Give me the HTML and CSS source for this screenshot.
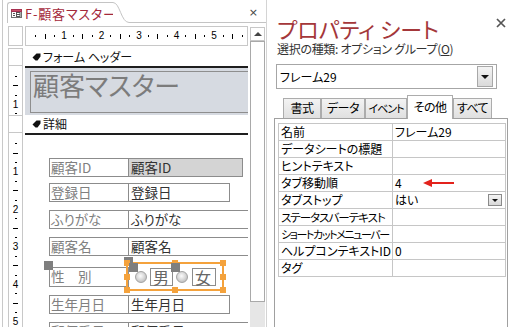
FILE: index.html
```html
<!DOCTYPE html>
<html lang="ja">

<head>
    <meta charset="UTF-8">
    <meta name="viewport" content="width=device-width, initial-scale=1.0">
    <title>F-顧客マスター</title>
    <link rel="stylesheet" href="styles.css">
</head>

<body>
    <div class="app">

        <!-- design view -->
        <div class="doc">
            <div class="doc-tabs">
                <div class="doc-tab">
                    <svg class="form-icon" width="11" height="9" viewBox="0 0 11 9">
                        <rect x="0.5" y="0.5" width="10" height="8" fill="#fff" stroke="#6e6e6e" />
                        <rect x="0.5" y="0.5" width="10" height="2" fill="#c8506a" stroke="#a63050" />
                        <line x1="2" y1="4.5" x2="4" y2="4.5" stroke="#555" />
                        <line x1="2" y1="6.5" x2="4" y2="6.5" stroke="#555" />
                        <rect x="5.5" y="3.5" width="3.5" height="4" fill="none" stroke="#555" />
                        <line x1="5.5" y1="5.5" x2="9" y2="5.5" stroke="#555" />
                    </svg>
                    <span class="doc-title">F-顧客マスター</span>
                </div>
                <svg class="tab-curve" width="16" height="21" viewBox="0 0 16 21">
                    <path d="M0 0.5 C7 0.5 8 20.5 16 20.5 L0 21 Z" fill="#fff" />
                    <path d="M0 0.5 C7 0.5 8 20.5 16 20.5" fill="none" stroke="#c4c4c4" />
                </svg>
                <div class="tab-fill"><span class="doc-close">×</span></div>
            </div>

            <div class="designer">
                <div class="vcol">
                    <div class="corner"></div>
                    <div class="vbox first"></div>
                    <div class="vruler head">
                        <div class="vr-in head-in">
                            <i class="c"></i><i class="c d"></i><i class="c m"></i><i class="c d"></i><i class="c n">1</i><i class="c d"></i>
                        </div>
                    </div>
                    <div class="vbox"></div>
                    <div class="vruler body">
                        <div class="vr-in body-in">
                            <i class="c"></i><i class="c d"></i><i class="c m"></i><i class="c d"></i><i class="c n">1</i>
                            <i class="c d"></i><i class="c m"></i><i class="c d"></i><i class="c n">2</i>
                            <i class="c d"></i><i class="c m"></i><i class="c d"></i><i class="c n">3</i>
                            <i class="c d"></i><i class="c m"></i><i class="c d"></i><i class="c n">4</i>
                            <i class="c d"></i><i class="c m"></i><i class="c d"></i><i class="c n">5</i>
                            <i class="c d"></i>
                        </div>
                    </div>
                </div>

                <div class="mid">
                    <div class="hruler">
                        <i class="c first"></i><i class="c d"></i><i class="c m"></i><i class="c d"></i><i class="c n">1</i>
                        <i class="c d"></i><i class="c m"></i><i class="c d"></i><i class="c n">2</i>
                        <i class="c d"></i><i class="c m"></i><i class="c d"></i><i class="c n">3</i>
                        <i class="c d"></i><i class="c m"></i><i class="c d"></i><i class="c n">4</i>
                        <i class="c d"></i><i class="c m"></i><i class="c d"></i><i class="c n">5</i>
                        <i class="c d"></i><i class="c m"></i><i class="c d"></i>
                    </div>

                    <div class="sec">
                        <svg class="sec-icon" width="9" height="8" viewBox="0 0 9 8">
                            <path d="M0.5 4.5 L4.5 0.5 H8.5 V3.5 L5.5 7.5 H3.5 Z" fill="#111" />
                        </svg>
                        フォーム ヘッダー
                    </div>
                    <div class="head-area">
                        <div class="title-label">顧客マスター</div>
                    </div>

                    <div class="sec">
                        <svg class="sec-icon" width="9" height="8" viewBox="0 0 9 8">
                            <path d="M0.5 4.5 L4.5 0.5 H8.5 V3.5 L5.5 7.5 H3.5 Z" fill="#111" />
                        </svg>
                        詳細
                    </div>
                    <div class="detail">
                        <div class="row">
                            <div class="lbl">顧客ID</div>
                            <div class="txt w1">顧客ID</div>
                        </div>
                        <div class="row r2">
                            <div class="lbl">登録日</div>
                            <div class="txt w2">登録日</div>
                        </div>
                        <div class="row">
                            <div class="lbl">ふりがな</div>
                            <div class="txt w3">ふりがな</div>
                        </div>
                        <div class="row">
                            <div class="lbl">顧客名</div>
                            <div class="txt w3">顧客名</div>
                        </div>
                        <div class="row sex">
                            <div class="lbl">性　別<span class="h h-lbl"></span></div>
                            <div class="optgroup">
                                <span class="h h-grp"></span>
                                <span class="g" style="left:-4px;top:-4px"></span>
                                <span class="g" style="left:44px;top:-4px"></span>
                                <span class="g" style="left:92px;top:-4px"></span>
                                <span class="g" style="left:-4px;top:10px"></span>
                                <span class="g" style="left:92px;top:10px"></span>
                                <span class="g" style="left:-4px;top:23px"></span>
                                <span class="g" style="left:44px;top:23px"></span>
                                <span class="g" style="left:92px;top:23px"></span>
                                <span class="radio"><span class="h h-rad"></span></span>
                                <span class="opt-lbl">男</span>
                                <span class="radio r-2"><span class="h h-rad2"></span></span>
                                <span class="opt-lbl l-2">女</span>
                            </div>
                        </div>
                        <div class="row">
                            <div class="lbl">生年月日</div>
                            <div class="txt w2">生年月日</div>
                        </div>
                        <div class="row">
                            <div class="lbl">郵便番号</div>
                            <div class="txt w3">郵便番号</div>
                        </div>
                    </div>
                </div>

                <div class="vscroll">
                    <div class="sc-up"></div>
                    <div class="sc-thumb"></div>
                    <div class="sc-track"></div>
                </div>
            </div>
        </div>

        <!-- property sheet -->
        <div class="props">
            <div class="props-head">
                <div class="props-title">プロパティ シート</div>
                <svg class="props-close" width="10" height="10" viewBox="0 0 10 10">
                    <path d="M1 1 L9 9 M9 1 L1 9" stroke="#555" stroke-width="1.7" />
                </svg>
            </div>
            <div class="sel-type">選択の種類: オプション グループ(<u>O</u>)</div>
            <div class="combo">
                <span>フレーム29</span>
                <span class="drop"><i class="tri"></i></span>
            </div>

            <div class="tabs">
                <div class="tab t1">書式</div>
                <div class="tab t2">データ</div>
                <div class="tab t3">イベント</div>
                <div class="tab t4 active">その他</div>
                <div class="tab t5">すべて</div>
            </div>
            <div class="panel">
                <table class="prop-table">
                    <tr><td>名前</td><td>フレーム29</td></tr>
                    <tr><td>データシートの標題</td><td></td></tr>
                    <tr><td>ヒントテキスト</td><td></td></tr>
                    <tr>
                        <td>タブ移動順</td>
                        <td>
                            <div class="cell">
                                <span>4</span>
                                <svg class="arrow" width="32" height="8" viewBox="0 0 32 8">
                                    <polygon points="0,4 9,0 9,8" fill="#e3221c" />
                                    <line x1="8" y1="4" x2="31" y2="4" stroke="#e3221c" stroke-width="2" />
                                </svg>
                            </div>
                        </td>
                    </tr>
                    <tr>
                        <td>タブストップ</td>
                        <td>
                            <div class="cell between">
                                <span>はい</span>
                                <span class="mini-drop"><i class="tri small"></i></span>
                            </div>
                        </td>
                    </tr>
                    <tr><td class="tight">ステータスバーテキスト</td><td></td></tr>
                    <tr><td class="tight more">ショートカットメニューバー</td><td></td></tr>
                    <tr><td>ヘルプコンテキストID</td><td>0</td></tr>
                    <tr><td>タグ</td><td></td></tr>
                </table>
            </div>
        </div>

    </div>
</body>

</html>
```

FILE: styles.css
```css
* {
    box-sizing: border-box;
}

body {
    margin: 0;
    background: #fff;
    color: #000;
    font-family: "Noto Sans CJK JP", "Noto Sans", sans-serif;
    font-feature-settings: "palt";
}

.app {
    display: flex;
    width: 513px;
    height: 327px;
    overflow: hidden;
}

/* ---------- design view ---------- */

.doc {
    width: 265px;
    margin-left: 2px;
    flex: none;
    display: flex;
    flex-direction: column;
    border-left: 1px solid #c9c9c9;
    border-right: 1px solid #d4d4d4;
}

.doc-tabs {
    display: flex;
    flex: none;
    height: 26px;
    padding-top: 2px;
    padding-left: 4px;
}

.doc-tab {
    display: flex;
    align-items: center;
    gap: 3px;
    width: 106px;
    height: 21px;
    padding-left: 3px;
    border-top: 1px solid #c4c4c4;
    border-left: 1px solid #c4c4c4;
    border-top-left-radius: 3px;
}

.form-icon {
    flex: none;
}

.doc-title {
    flex: none;
    font-size: 13px;
    line-height: 1;
    letter-spacing: 0.8px;
    color: #a4293b;
    white-space: nowrap;
}

.tab-curve {
    display: block;
    flex: none;
}

.tab-fill {
    flex: 1;
    height: 21px;
    display: flex;
    justify-content: flex-end;
    align-items: center;
    padding-right: 8px;
    border-bottom: 1px solid #c4c4c4;
}

.doc-close {
    font-family: "DejaVu Sans", sans-serif;
    font-size: 11px;
    line-height: 1;
    color: #444;
}

.designer {
    flex: 1;
    display: flex;
    padding-left: 5px;
    min-height: 0;
}

/* rulers */

.vcol {
    width: 15px;
    flex: none;
    display: flex;
    flex-direction: column;
}

.corner {
    height: 20px;
    flex: none;
    border: 1px solid #c8c8c8;
}

.vbox {
    height: 18px;
    flex: none;
    border: 1px solid #c8c8c8;
}

.vbox.first {
    margin-top: 2px;
}

.vruler {
    flex: none;
    overflow: hidden;
    border-left: 1px solid #c8c8c8;
    border-right: 1px solid #c8c8c8;
}

.vruler.head {
    height: 49px;
}

.vruler.body {
    flex: 1;
}

.vr-in {
    display: flex;
    flex-direction: column;
}

.head-in {
    margin-top: -3.7px;
}

.body-in {
    margin-top: -3.2px;
}

.c {
    flex: none;
    display: flex;
    justify-content: center;
    align-items: center;
    font-style: normal;
    font-family: "Liberation Sans", sans-serif;
    font-size: 10px;
    line-height: 1;
}

.vr-in .c {
    height: 9.375px;
}

.vr-in .c.d::before {
    content: "";
    width: 2px;
    height: 1px;
    background: #000;
}

.vr-in .c.m::before {
    content: "";
    width: 5px;
    height: 1px;
    background: #000;
}

.hruler {
    height: 20px;
    flex: none;
    display: flex;
    align-items: center;
    overflow: hidden;
    margin-bottom: 2px;
    border: 1px solid #c8c8c8;
}

.hruler .c {
    width: 9.375px;
    height: 12px;
}

.hruler .c.first {
    margin-left: -4.2px;
}

.hruler .c.d::before {
    content: "";
    width: 1px;
    height: 2px;
    background: #000;
}

.hruler .c.m::before {
    content: "";
    width: 1px;
    height: 5px;
    background: #000;
}

/* sections */

.mid {
    width: 223px;
    margin-left: 2px;
    flex: none;
    display: flex;
    flex-direction: column;
    overflow: hidden;
}

.sec {
    height: 20px;
    flex: none;
    display: flex;
    align-items: center;
    gap: 2px;
    padding-left: 7px;
    font-size: 12px;
    line-height: 1;
    color: #111;
    border-bottom: 2px solid #1e1e1e;
}

.sec-icon {
    flex: none;
}

.head-area {
    height: 47px;
    flex: none;
    padding: 3px 0 0 5px;
    background: #d6dae1;
}

.title-label {
    width: 240px;
    height: 42px;
    padding-left: 2px;
    border: 1px solid #8e8e8e;
    font-size: 26px;
    line-height: 26px;
    color: #7c7c7c;
    white-space: nowrap;
}

.detail {
    flex: 1;
    display: flex;
    flex-direction: column;
    gap: 8px;
    padding: 23px 0 0 24px;
}

.row {
    display: flex;
    flex: none;
    height: 19px;
}

.row.r2 {
    margin-top: -2px;
}

.row.sex {
    height: 20px;
    margin-top: 3px;
}

.lbl {
    position: relative;
    width: 80px;
    height: 100%;
    flex: none;
    padding-left: 1px;
    border: 1px solid #8c8c8c;
    font-size: 13.5px;
    line-height: 17px;
    color: #808080;
    white-space: nowrap;
}

.txt {
    height: 100%;
    flex: none;
    margin-left: -1px;
    padding-left: 2px;
    border: 1px solid #8c8c8c;
    font-size: 13.5px;
    line-height: 17px;
    color: #333;
    white-space: nowrap;
}

.txt.w1 {
    width: 115px;
    background: #d4d4d4;
}

.txt.w2 {
    width: 102px;
}

.txt.w3 {
    width: 140px;
    border-right: none;
}

/* option group (selected) */

.optgroup {
    position: relative;
    width: 98px;
    height: 29px;
    flex: none;
    margin: -5px 0 -4px -3px;
    padding-left: 7px;
    display: flex;
    align-items: center;
    border: 2px solid #f4a23c;
}

.g {
    position: absolute;
    width: 6px;
    height: 6px;
    background: #f4a23c;
}

.h {
    position: absolute;
    width: 9px;
    height: 9px;
    background: #7f7f7f;
}

.h-lbl {
    left: -6px;
    top: -7px;
}

.h-grp {
    left: -4px;
    top: -7px;
}

.h-rad {
    left: -7px;
    top: -9px;
}

.h-rad2 {
    left: -6px;
    top: -9px;
}

.radio {
    position: relative;
    width: 12px;
    height: 12px;
    flex: none;
    border: 1px solid #a3a3a3;
    border-radius: 50%;
    background: radial-gradient(circle at 45% 40%, #fbfbfb 0, #dadada 45%, #acacac 100%);
}

.radio.r-2 {
    margin-left: 3px;
}

.opt-lbl {
    width: 23px;
    height: 18px;
    flex: none;
    margin-left: 3px;
    padding-left: 2px;
    border: 1px solid #8c8c8c;
    font-size: 16px;
    line-height: 16px;
    color: #666;
}

.opt-lbl.l-2 {
    width: 24px;
    margin-left: 4px;
}

/* scrollbar */

.vscroll {
    width: 15px;
    flex: none;
    margin-left: 2px;
    display: flex;
    flex-direction: column;
}

.sc-up {
    height: 14px;
    flex: none;
    margin-top: 1px;
    display: flex;
    justify-content: center;
    align-items: center;
    border: 1px solid #c8c8c8;
}

.sc-up::before {
    content: "";
    border-left: 4px solid transparent;
    border-right: 4px solid transparent;
    border-bottom: 4px solid #444;
}

.sc-thumb {
    height: 261px;
    flex: none;
    background: #fff;
    border: 1px solid #a9a9a9;
}

.sc-track {
    flex: 1;
    background: #e6e6e6;
}

/* ---------- property sheet ---------- */

.props {
    flex: 1;
    display: flex;
    flex-direction: column;
    padding: 16px 5px 0 9px;
    min-width: 0;
}

.props-head {
    display: flex;
    justify-content: space-between;
    align-items: flex-start;
    height: 25px;
    flex: none;
}

.props-title {
    padding-left: 1px;
    font-size: 22px;
    line-height: 24px;
    color: #a4373a;
    white-space: nowrap;
}

.props-close {
    margin-top: 2px;
    margin-right: 2px;
}

.sel-type {
    flex: none;
    padding-left: 1px;
    font-size: 12px;
    line-height: 16px;
    letter-spacing: -0.3px;
    color: #333;
    white-space: nowrap;
}

.combo {
    width: 221px;
    height: 25px;
    flex: none;
    margin-top: 7px;
    padding: 0 3px 0 3px;
    display: flex;
    justify-content: space-between;
    align-items: center;
    border: 1px solid #a6a6a6;
    font-size: 12px;
}

.drop {
    width: 16px;
    height: 21px;
    display: flex;
    justify-content: center;
    align-items: center;
    border: 1px solid #a8a8a8;
    background: linear-gradient(#f4f4f4, #dadada);
}

.tri {
    border-left: 4px solid transparent;
    border-right: 4px solid transparent;
    border-top: 4px solid #111;
}

.tri.small {
    border-left-width: 3px;
    border-right-width: 3px;
    border-top-width: 3px;
}

.tabs {
    position: relative;
    z-index: 1;
    height: 24px;
    flex: none;
    margin-top: 6px;
    margin-bottom: -1px;
    padding-left: 7px;
    display: flex;
    align-items: flex-end;
}

.tab {
    height: 20px;
    margin-bottom: 1px;
    border: 1px solid #acacac;
    border-bottom: none;
    background: linear-gradient(#f3f3f3, #e0e0e0);
    font-size: 12px;
    line-height: 18px;
    letter-spacing: -0.5px;
    text-align: center;
    white-space: nowrap;
    overflow: hidden;
}

.tab.active {
    height: 24px;
    margin-bottom: 0;
    background: #fff;
    line-height: 21px;
}

.t1 { width: 38px; }
.t2 { width: 44px; }
.t3 { width: 42px; font-size: 11px; letter-spacing: -1px; }
.t4 { width: 46px; }
.t5 { width: 39px; }

.panel {
    flex: 1;
    margin-left: -2px;
    padding: 4px 0 0 3px;
    border: 1px solid #a0a0a0;
    border-bottom: none;
}

.prop-table {
    width: 228px;
    border-collapse: collapse;
    table-layout: fixed;
    font-size: 12px;
}

.prop-table tr {
    height: 17px;
}

.prop-table td {
    padding: 0 0 0 2px;
    border: 1px solid #c6c6c6;
    line-height: 14px;
    white-space: nowrap;
    overflow: hidden;
}

.prop-table td:first-child {
    width: 114px;
}

.prop-table td.tight {
    font-size: 11.5px;
    letter-spacing: -1px;
}

.prop-table td.tight.more {
    font-size: 11px;
    letter-spacing: -1.4px;
}

.cell {
    display: flex;
    align-items: center;
}

.cell.between {
    justify-content: space-between;
    padding-right: 3px;
}

.arrow {
    margin-left: 21px;
}

.mini-drop {
    width: 14px;
    height: 12px;
    display: flex;
    justify-content: center;
    align-items: center;
    border: 1px solid #8a8a8a;
    background: linear-gradient(#f4f4f4, #d8d8d8);
}
```
